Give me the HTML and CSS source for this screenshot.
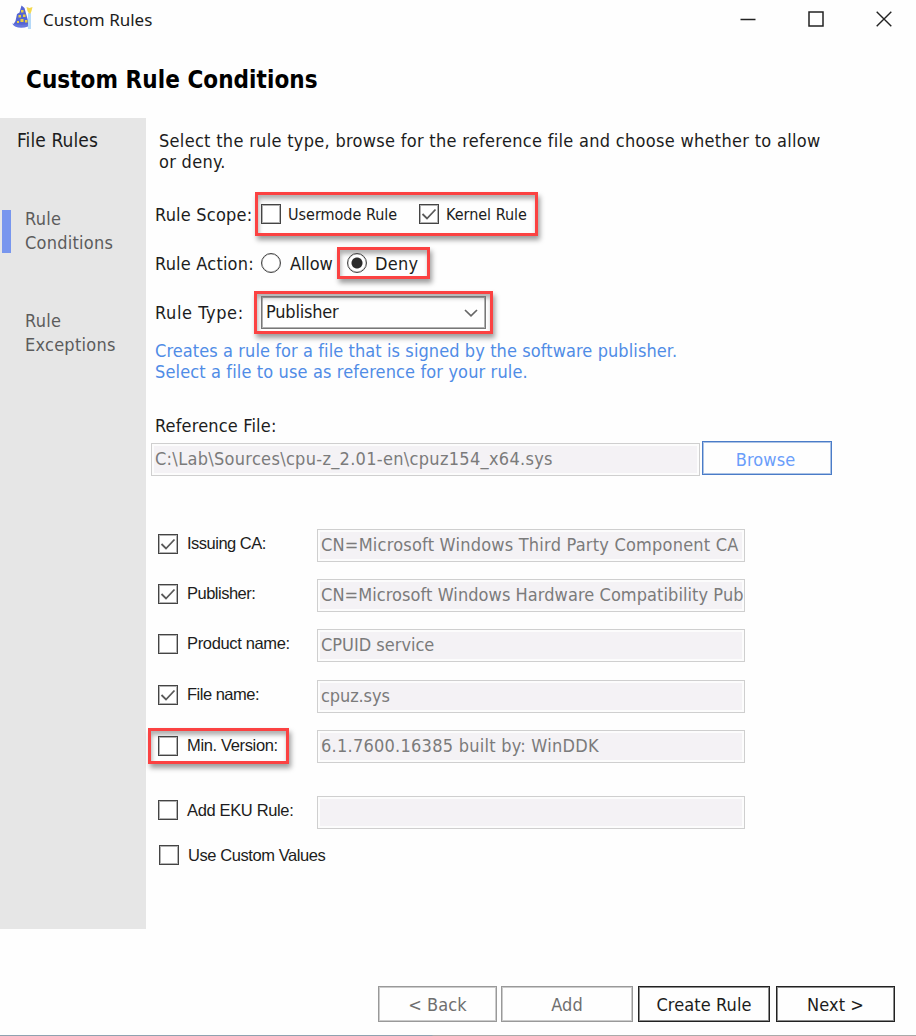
FILE: index.html
```
<!DOCTYPE html>
<html lang="en">
<head>
<meta charset="utf-8">
<title>Custom Rules</title>
<link rel="stylesheet" href="styles.css">
</head>
<body>
<div class="window">
  <header class="titlebar">
    <svg class="app-icon" width="22" height="26" viewBox="0 0 22 26">
      <path d="M9.500 .5L12.500 3L16.500 17.500L18 20Q10 24 1 20L3.500 16L5 9L7.500 7.500Z" fill="#5565d3"/>
      <path d="M0 18.500Q10 21 19 18.500L16 21.500Q9 24 3 21.500Z" fill="#6677dd"/>
      <g fill="#e9cf43"><rect x="9" y="5" width="2.500" height="2.500"/><rect x="6.500" y="10" width="2.500" height="2.500"/><rect x="11" y="9.500" width="2.500" height="2.500"/><rect x="8.500" y="14" width="3" height="3"/><rect x="13" y="15" width="2.500" height="2.500"/><rect x="5" y="16" width="2" height="2"/></g>
      <rect x="16" y="8" width="3" height="16" fill="#b5d9f8"/>
      <path d="M14.500 2L17.500 3L20.500 2L19.500 6L18.500 8.500H17L15.500 6Z" fill="#f4d94e"/>
    </svg>
    <span class="app-name">Custom Rules</span>
    <div class="controls">
      <svg width="16" height="16" viewBox="0 0 16 16"><path d="M.5 8.500H15.500" stroke="#222" stroke-width="1.500"/></svg>
      <svg width="16" height="16" viewBox="0 0 16 16"><rect x="1" y="1" width="14" height="14" fill="none" stroke="#222" stroke-width="1.500"/></svg>
      <svg width="16" height="16" viewBox="0 0 16 16"><path d="M.7.7L15.300 15.300M15.300.7L.7 15.300" stroke="#222" stroke-width="1.400"/></svg>
    </div>
  </header>
  <h1 class="heading">Custom Rule Conditions</h1>

  <div class="body">
    <nav class="sidebar">
      <div class="nav-title">File Rules</div>
      <div class="nav-item active">Rule<br>Conditions</div>
      <div class="nav-item">Rule<br>Exceptions</div>
    </nav>

    <main class="content">
      <p class="desc">Select the rule type, browse for the reference file and choose whether to allow<br>or deny.</p>

      <div class="row scope">
        <span class="label">Rule Scope:</span>
        <div class="callout scope-box">
          <span class="check"></span><span class="small usermode">Usermode Rule</span>
          <span class="check"><svg width="18" height="18" viewBox="0 0 18 18"><path d="M2.500 9L7 13.500L15.500 4.500"/></svg></span><span class="small">Kernel Rule</span>
        </div>
      </div>

      <div class="row action">
        <span class="label">Rule Action:</span>
        <div class="allow"><span class="radio"></span><span>Allow</span></div>
        <div class="callout deny-box"><span class="radio on"></span><span>Deny</span></div>
      </div>

      <div class="row type">
        <span class="label type-label">Rule Type:</span>
        <div class="callout type-box">
          <div class="select"><span>Publisher</span>
            <svg width="14" height="8" viewBox="0 0 14 8"><path d="M1 1L7 6.800L13 1" fill="none" stroke="#666" stroke-width="1.700"/></svg>
          </div>
        </div>
      </div>

      <p class="hint">Creates a rule for a file that is signed by the software publisher.<br><span class="hint-more">Select a file to use as reference for your rule.</span></p>

      <div class="ref-label">Reference File:</div>
      <div class="ref-row">
        <div class="field path">C:\Lab\Sources\cpu-z_2.01-en\cpuz154_x64.sys</div>
        <div class="button browse">Browse</div>
      </div>

      <div class="attrs">
        <div class="attr"><div class="attr-label tight"><span class="check"><svg width="18" height="18" viewBox="0 0 18 18"><path d="M2.500 9L7 13.500L15.500 4.500"/></svg></span><span>Issuing CA:</span></div><div class="field cn">CN=Microsoft Windows Third Party Component CA</div></div>
        <div class="attr"><div class="attr-label tight"><span class="check"><svg width="18" height="18" viewBox="0 0 18 18"><path d="M2.500 9L7 13.500L15.500 4.500"/></svg></span><span>Publisher:</span></div><div class="field cn-long">CN=Microsoft Windows Hardware Compatibility Pub</div></div>
        <div class="attr"><div class="attr-label"><span class="check"></span><span>Product name:</span></div><div class="field plain">CPUID service</div></div>
        <div class="attr file"><div class="attr-label tight"><span class="check"><svg width="18" height="18" viewBox="0 0 18 18"><path d="M2.500 9L7 13.500L15.500 4.500"/></svg></span><span>File name:</span></div><div class="field short">cpuz.sys</div></div>
        <div class="attr"><div class="callout version-box"><div class="attr-label"><span class="check"></span><span>Min. Version:</span></div></div><div class="field">6.1.7600.16385 built by: WinDDK</div></div>
        <div class="attr eku"><div class="attr-label"><span class="check"></span><span>Add EKU Rule:</span></div><div class="field"></div></div>
        <div class="attr-label custom"><span class="check"></span><span>Use Custom Values</span></div>
      </div>
    </main>
  </div>

  <footer class="footer">
    <div class="button back">&lt; Back</div>
    <div class="button add">Add</div>
    <div class="button create">Create Rule</div>
    <div class="button next">Next &gt;</div>
  </footer>
  <div class="edge"></div>
</div>
</body>
</html>
```
FILE: styles.css
```
* { box-sizing: border-box; }

body {
  margin: 0;
  background: #fefefe;
  color: #1c1c20;
  font-family: "DejaVu Sans Condensed", "DejaVu Sans", Tahoma, sans-serif;
  font-stretch: condensed;
  font-size: 18px;
  line-height: 21px;
  letter-spacing: .25px;
  white-space: nowrap;
}

p, h1 { margin: 0; }
svg { display: block; flex: none; }

.window {
  width: 916px;
  height: 1036px;
  display: flex;
  flex-direction: column;
  overflow: hidden;
}

.titlebar {
  height: 37px;
  padding: 0 24px 0 12px;
  display: flex;
  align-items: center;
  flex: none;
}
.app-icon { margin-top: -1px; }
.app-name {
  margin: 2px 0 0 9px;
  font-family: "Noto Sans", sans-serif;
  font-stretch: normal;
  font-size: 17px;
  letter-spacing: 0;
}
.controls { margin-left: auto; display: flex; gap: 52px; }

.heading {
  height: 81px;
  padding: 31px 0 0 26px;
  flex: none;
  color: #000;
  font-size: 24px;
  line-height: 24px;
  font-weight: bold;
  letter-spacing: .05px;
}

.body { height: 811px; display: flex; flex: none; }

.sidebar { width: 146px; background: #e6e6e6; flex: none; padding-top: 12px; }
.nav-title {
  padding-left: 17px;
  font-size: 19px;
  letter-spacing: .1px;
}
.nav-item {
  height: 48px;
  margin-top: 54px;
  padding-left: 25px;
  line-height: 24px;
  color: #5c5c5c;
}
.nav-item.active {
  margin-top: 56px;
  background: linear-gradient(#7896ee, #7896ee) 2px 3px / 9px 43px no-repeat;
}

.content { flex: 1; padding: 12px 0 0 9px; }
.desc { padding-left: 4px; letter-spacing: .3px; }

.row { display: flex; align-items: center; }
.label { width: 100px; flex: none; letter-spacing: .2px; }
.type-label { letter-spacing: .6px; margin-top: -1px; }
.scope { margin-top: 20px; height: 44px; }
.action { margin-top: 11px; height: 32px; width: 275px; }
.type { margin-top: 12px; height: 43px; }

.callout {
  border: 3px solid #fb4242;
  box-shadow: 2px 4px 5px rgba(0, 0, 0, .38), inset 1px 4px 4px rgba(0, 0, 0, .3);
  display: flex;
  align-items: center;
}
.scope-box { width: 283px; height: 44px; padding-left: 3px; }
.deny-box { width: 93px; height: 32px; padding-left: 7px; margin-left: auto; }
.type-box { width: 239px; height: 43px; margin-left: -1px; padding-left: 4px; }

.small { font-size: 16px; letter-spacing: 0; margin-left: 7px; }
.usermode { width: 131px; }

.check {
  width: 20px;
  height: 20px;
  border: 1px solid #444;
  box-shadow: inset 0 0 0 1px rgba(0, 0, 0, .3);
  background: #fff;
  flex: none;
}
.check path { fill: none; stroke: #5a5a5a; stroke-width: 1.8; }

.radio {
  width: 20px;
  height: 20px;
  border: 1px solid #444;
  box-shadow: inset 0 0 0 .5px rgba(0, 0, 0, .3);
  border-radius: 50%;
  background: #fff;
  margin-right: 9px;
  flex: none;
}
.radio.on { background: radial-gradient(circle, #2b2b2b 5px, #fff 6px); margin-right: 8px; }
.allow { display: flex; align-items: center; padding-left: 6px; letter-spacing: -.1px; }

.select {
  width: 225px;
  height: 33px;
  border: 1px solid #777;
  box-shadow: inset 0 0 0 1px rgba(0, 0, 0, .3);
  padding: 0 7px 3px 4px;
  display: flex;
  align-items: center;
  justify-content: space-between;
  letter-spacing: -.2px;
}
.select svg { margin-top: 4px; }

.hint { margin-top: 6px; color: #508ce6; letter-spacing: .09px; }
.hint-more { letter-spacing: .13px; }
.ref-label { margin-top: 33px; height: 22px; line-height: 22px; letter-spacing: .17px; }
.ref-row { margin: 4px 0 0 -4px; display: flex; align-items: flex-start; }

.field {
  width: 428px;
  height: 33px;
  border: 1px solid #cfcfcf;
  box-shadow: inset 0 0 0 2px #fcfcfc;
  background: #f4f2f5;
  color: #7b7b7b;
  padding: 4px 0 0 3px;
  flex: none;
  overflow: hidden;
}
.field.path { width: 549px; margin: 2px 2px 0 0; letter-spacing: .3px; }
.field.cn { letter-spacing: .22px; }
.field.cn-long { letter-spacing: .07px; }
.field.plain { letter-spacing: 0; }
.field.short { letter-spacing: -.1px; }

.button {
  height: 36px;
  border: 1px solid #222;
  box-shadow: inset 0 0 0 1px rgba(0, 0, 0, .45);
  display: flex;
  align-items: center;
  justify-content: center;
  letter-spacing: .1px;
}
.browse {
  width: 130px;
  height: 34px;
  border-color: #4a7cc8;
  box-shadow: inset 0 0 0 1px rgba(74, 124, 200, .45);
  color: #6a9dfa;
  padding: 3px 3px 0 0;
}

.attrs { margin-top: 51px; }
.attr { display: flex; align-items: center; height: 36px; margin-bottom: 14px; }
.attr.file { margin-top: 15px; }
.attr-label {
  width: 159px;
  height: 20px;
  margin: -3px 3px 0 0;
  padding-left: 3px;
  display: flex;
  align-items: center;
  gap: 9px;
  flex: none;
  font-family: "Liberation Sans", Arial, sans-serif;
  font-size: 16.5px;
  letter-spacing: -.35px;
}
.attr-label.tight { letter-spacing: -.5px; }
.version-box { width: 141px; height: 36px; margin: 0 28px 0 -7px; }
.version-box .attr-label { padding-left: 7px; margin: -1px 0 0; width: auto; }
.attr.eku { margin-top: 30px; margin-bottom: 0; }
.eku .attr-label { margin-top: -4px; }
.custom { margin-top: 15px; padding-left: 4px; letter-spacing: -.42px; }

.footer { display: flex; margin-top: 57px; padding-left: 378px; flex: none; }
.back { width: 119px; margin-right: 4px; }
.add { width: 132px; margin-right: 5px; }
.back, .add { border-color: #999; box-shadow: inset 0 0 0 1px rgba(0, 0, 0, .2); color: #6f6f6f; }
.create { width: 132px; margin-right: 6px; }
.next { width: 119px; }

.edge {
  height: 1px;
  margin-top: auto;
  background: linear-gradient(90deg, #8fa2b0 432px, #aaa 433px);
  flex: none;
}
```
